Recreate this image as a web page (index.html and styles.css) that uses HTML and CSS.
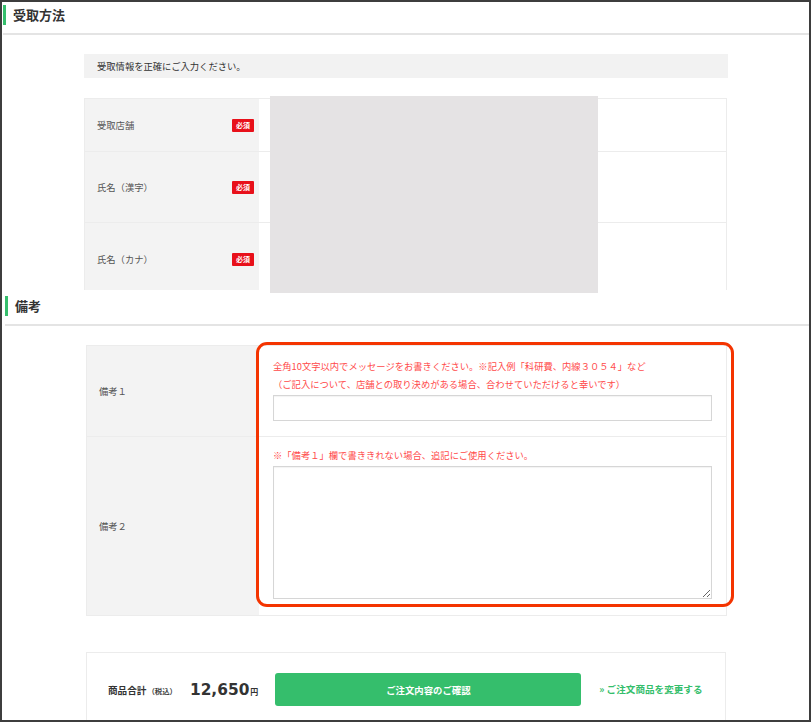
FILE: index.html
```html
<!DOCTYPE html>
<html lang="ja">
<head>
<meta charset="utf-8">
<title>受取方法</title>
<link rel="stylesheet" href="styles.css">
</head>
<body>
<div class="frame">
  <section class="sec sec-first">
    <h2 class="sec-head">受取方法</h2>
    <div class="sec-body">
      <p class="notice">受取情報を正確にご入力ください。</p>
      <div class="clip">
        <div class="table t1">
          <div class="row r1">
            <div class="label"><span>受取店舗</span><span class="req">必須</span></div>
            <div class="cell"></div>
          </div>
          <div class="row r2">
            <div class="label"><span>氏名（漢字）</span><span class="req">必須</span></div>
            <div class="cell"></div>
          </div>
          <div class="row r3">
            <div class="label"><span>氏名（カナ）</span><span class="req">必須</span></div>
            <div class="cell"></div>
          </div>
        </div>
      </div>
    </div>
  </section>

  <section class="sec sec-second">
    <h2 class="sec-head">備考</h2>
    <div class="sec-body">
      <div class="table t2">
        <div class="row">
          <div class="label"><span>備考１</span></div>
          <div class="cell field">
            <p class="hint">全角10文字以内でメッセージをお書きください。※記入例「科研費、内線３０５４」など</p>
            <p class="hint">（ご記入について、店舗との取り決めがある場合、合わせていただけると幸いです）</p>
            <input class="text-input" type="text">
          </div>
        </div>
        <div class="row">
          <div class="label"><span>備考２</span></div>
          <div class="cell field field-2">
            <p class="hint">※「備考１」欄で書ききれない場合、追記にご使用ください。</p>
            <textarea class="text-area"></textarea>
          </div>
        </div>
      </div>

      <div class="footer">
        <div class="total">
          <span class="total-label">商品合計<small>（税込）</small></span>
          <span class="price">12,650<small>円</small></span>
        </div>
        <button class="confirm" type="button">ご注文内容のご確認</button>
        <a class="change" href="#">» ご注文商品を変更する</a>
      </div>
    </div>
  </section>

  <div class="redact"></div>
  <div class="highlight"></div>
</div>
</body>
</html>
```

FILE: styles.css
```css
* { box-sizing: border-box; }

html, body {
  margin: 0;
  padding: 0;
  background: #fff;
}

body {
  font-family: "Noto Sans CJK JP", "Noto Sans", sans-serif;
  color: #333;
}

.frame {
  position: relative;
  width: 811px;
  height: 722px;
  border: 2px solid #3d3d3d;
  overflow: hidden;
  background: #fff;
}

.sec-first { margin-left: 1px; }
.sec-second { margin-left: 3px; margin-top: 3px; }

.sec-head {
  margin: 0;
  display: flex;
  align-items: center;
  padding: 3px 0 8px;
  border-bottom: 2px solid #e4e4e4;
  font-size: 13px;
  font-weight: 700;
  line-height: 20px;
  color: #333;
}

.sec-head::before {
  content: "";
  width: 3px;
  height: 20px;
  background: #35be6c;
  margin-right: 7px;
}

.sec-body {
  padding-left: 81px;
}

.notice {
  margin: 19px 0 0;
  width: 644px;
  height: 24px;
  background: #f2f2f2;
  padding-left: 13px;
  font-size: 9.3px;
  line-height: 24px;
  color: #333;
}

.clip {
  margin-top: 20px;
  height: 192px;
  overflow: hidden;
}

.table {
  border: 1px solid #ececec;
}

.t1 { width: 643px; border-bottom: 0; }
.t2 { width: 641px; margin-top: 19px; }

.row {
  display: grid;
  border-bottom: 1px solid #ececec;
}

.t1 .row { grid-template-columns: 174px 1fr; }
.t2 .row { grid-template-columns: 172px 1fr; }
.row:last-child { border-bottom: 0; }

.r1 { height: 53px; }
.r2 { height: 71px; }
.r3 { height: 72px; }

.label {
  background: #f3f3f3;
  display: flex;
  align-items: center;
  justify-content: space-between;
  padding: 0 5px 0 12px;
  font-size: 9.3px;
  color: #555;
}

.req {
  display: inline-block;
  width: 22px;
  height: 13px;
  line-height: 13px;
  text-align: center;
  background: #e8101a;
  color: #fff;
  font-size: 7px;
  font-weight: 700;
  border-radius: 1px;
}

.cell {
  background: #fff;
}

.field {
  padding: 11px 14px 15px;
}

.field-2 {
  padding-top: 9px;
  padding-bottom: 16px;
}

.hint {
  margin: 0;
  font-size: 9.3px;
  line-height: 18px;
  color: #ff4a4a;
  white-space: nowrap;
}

.text-input {
  display: block;
  margin-top: 2px;
  width: 439px;
  height: 26px;
  border: 1px solid #d6d6d6;
  box-shadow: inset 0 1px 1px rgba(0,0,0,0.05);
  background: #fff;
  padding: 0 6px;
}

.text-area {
  display: block;
  margin-top: 2px;
  width: 439px;
  height: 133px;
  border: 1px solid #d6d6d6;
  box-shadow: inset 0 1px 1px rgba(0,0,0,0.05);
  background: #fff;
  resize: both;
}

.footer {
  margin-top: 36px;
  width: 640px;
  height: 100px;
  border: 1px solid #ececec;
  display: flex;
  align-items: flex-start;
  padding: 20px 0 0 21px;
}

.total {
  display: flex;
  align-items: center;
  height: 33px;
}

.total-label {
  font-size: 9.6px;
  font-weight: 700;
  color: #333;
}

.total-label small {
  font-size: 7.4px;
  font-weight: 700;
  margin-left: 1px;
  color: #444;
}

.price {
  margin-left: 13px;
  font-family: "DejaVu Sans", "Noto Sans CJK JP", sans-serif;
  font-size: 15.4px;
  font-weight: 700;
  color: #333;
}

.price small {
  font-family: "Noto Sans CJK JP", sans-serif;
  font-size: 8px;
  font-weight: 700;
  margin-left: 1px;
}

.confirm {
  margin-left: 17px;
  width: 306px;
  height: 33px;
  border: 0;
  border-radius: 3px;
  background: #35be6c;
  color: #fff;
  font-family: "Noto Sans CJK JP", sans-serif;
  font-size: 9.4px;
  font-weight: 700;
  padding: 0;
}

.change {
  margin-left: 18px;
  height: 33px;
  line-height: 33px;
  font-size: 9.6px;
  font-weight: 700;
  color: #35be6c;
  text-decoration: none;
  white-space: nowrap;
}

.redact {
  position: absolute;
  left: 268px;
  top: 94px;
  width: 328px;
  height: 197px;
  background: #e5e3e4;
}

.highlight {
  position: absolute;
  left: 254px;
  top: 340px;
  width: 478px;
  height: 265px;
  border: 3px solid #f43400;
  border-radius: 11px;
}
```
